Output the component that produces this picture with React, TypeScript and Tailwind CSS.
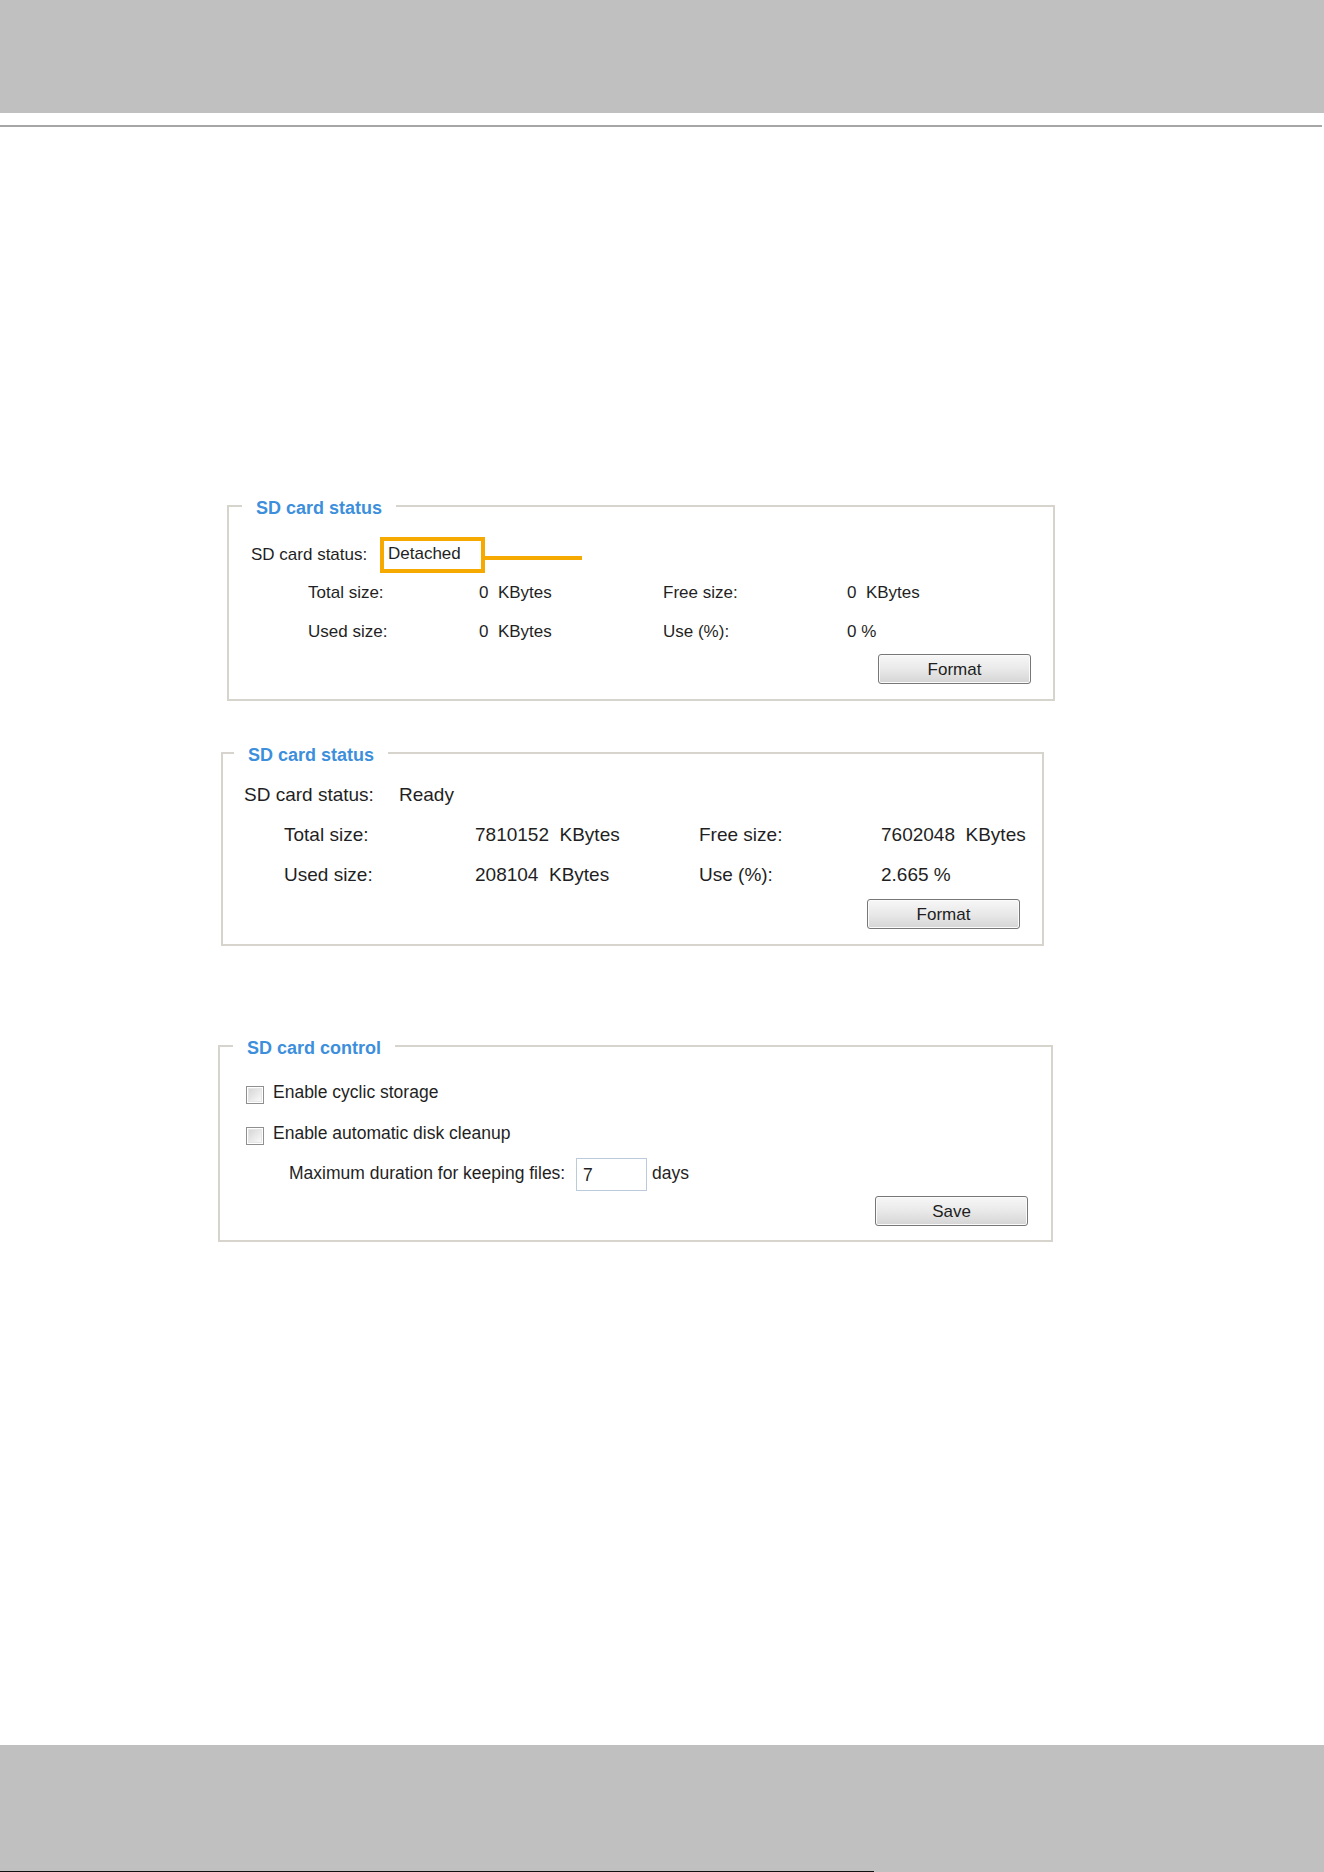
import type { ReactNode } from 'react';

type StorageStats = {
  total: string;
  used: string;
  free: string;
  usage: string;
};

const detached: StorageStats = { total: '0', used: '0', free: '0', usage: '0' };
const ready: StorageStats = { total: '7810152', used: '208104', free: '7602048', usage: '2.665' };

function Panel({
  title,
  legendOffset,
  className,
  children,
}: {
  title: string;
  legendOffset: string;
  className: string;
  children: ReactNode;
}) {
  return (
    <fieldset className={`min-w-0 border-2 border-[#d7d4cd] ${className}`}>
      <legend className={`${legendOffset} px-[14px] text-[18px] font-bold leading-[22px] text-[#3d8fdc]`}>
        <span className="relative top-[2px]">{title}</span>
      </legend>
      {children}
    </fieldset>
  );
}

function PushButton({ label }: { label: string }) {
  return (
    <button
      type="button"
      className="h-[30px] w-[153px] rounded-[3px] border border-[#777777] bg-gradient-to-b from-[#f7f7f7] via-[#e9e9e9] to-[#d5d5d5] text-[17px] leading-none text-[#1e1e1e] shadow-[inset_0_0_0_1px_#fbfbfb]"
    >
      {label}
    </button>
  );
}

function Checkbox() {
  return (
    <span className="mt-[5px] flex h-[18px] w-[18px] shrink-0 items-center justify-center border border-[#8e8f8f] bg-white">
      <span className="h-[14px] w-[14px] border border-[#e6e6e6] bg-gradient-to-br from-[#d7d7d7] to-[#f9f9f9]" />
    </span>
  );
}

function StatsGrid({ stats, cols, pad, text }: { stats: StorageStats; cols: string; pad: string; text: string }) {
  return (
    <div className={`grid whitespace-pre ${cols} ${pad} ${text}`}>
      <span>Total size:</span>
      <span>{stats.total}  KBytes</span>
      <span>Free size:</span>
      <span>{stats.free}  KBytes</span>
      <span>Used size:</span>
      <span>{stats.used}  KBytes</span>
      <span>Use (%):</span>
      <span>{stats.usage} %</span>
    </div>
  );
}

export default function App() {
  return (
    <div className="flex h-[1872px] flex-col bg-white font-['Liberation_Sans',Arial,sans-serif] text-[#1f1f24]">
      <div className="h-[113px] shrink-0 bg-[#bfc0bf]" />
      <div className="mt-[12px] h-[2px] w-[1322px] shrink-0 bg-[#a6a6a6]" />

      {/* card detached, with the callout on its status */}
      <Panel title="SD card status" legendOffset="ml-[13px]" className="ml-[227px] mt-[368px] w-[828px] pb-[15px]">
        <div className="mt-[20px] flex h-[36px] items-center pl-[22px] text-[17px]">
          <span className="w-[129px]">SD card status:</span>
          <span className="flex h-[36px] w-[105px] items-center border-[4px] border-[#f6a900] pl-[4px] pb-[3px]">Detached</span>
          <span className="mt-[6px] h-[4px] w-[97px] bg-[#f6a900]" />
        </div>
        <StatsGrid stats={detached} cols="grid-cols-[171px_184px_184px_1fr]" pad="pl-[79px]" text="text-[17px] leading-[39px]" />
        <div className="mt-[3px] flex justify-end pr-[22px]">
          <PushButton label="Format" />
        </div>
      </Panel>

      {/* card ready */}
      <Panel title="SD card status" legendOffset="ml-[11px]" className="ml-[221px] mt-[41px] w-[823px] pb-[15px]">
        <div className="mt-[11px] flex pl-[21px] text-[19px] leading-[40px]">
          <span className="w-[155px]">SD card status:</span>
          <span>Ready</span>
        </div>
        <StatsGrid stats={ready} cols="grid-cols-[191px_224px_182px_1fr]" pad="pl-[61px]" text="text-[19px] leading-[40px]" />
        <div className="mt-[4px] flex justify-end pr-[22px]">
          <PushButton label="Format" />
        </div>
      </Panel>

      <Panel title="SD card control" legendOffset="ml-[13px]" className="ml-[218px] mt-[89px] w-[835px] pb-[14px]">
        <div className="mt-[15px] text-[17.5px] leading-[40px]">
          <label className="flex items-center pl-[26px]">
            <Checkbox />
            <span className="ml-[9px]">Enable cyclic storage</span>
          </label>
          <label className="mt-[1px] flex items-center pl-[26px]">
            <Checkbox />
            <span className="ml-[9px]">Enable automatic disk cleanup</span>
          </label>
          <div className="flex items-center pl-[69px]">
            <span className="w-[287px] shrink-0">Maximum duration for keeping files:</span>
            <input
              defaultValue="7"
              className="mt-[3px] h-[33px] w-[71px] border border-[#bccbdc] pl-[6px] text-[17.5px] outline-none"
            />
            <span className="ml-[5px]">days</span>
          </div>
        </div>
        <div className="mt-[3px] flex justify-end pr-[23px]">
          <PushButton label="Save" />
        </div>
      </Panel>

      <div className="mt-auto flex h-[127px] shrink-0 flex-col justify-end bg-[#bfc0bf]">
        <div className="h-[1px] w-[874px] bg-[#111111]" />
      </div>
    </div>
  );
}
